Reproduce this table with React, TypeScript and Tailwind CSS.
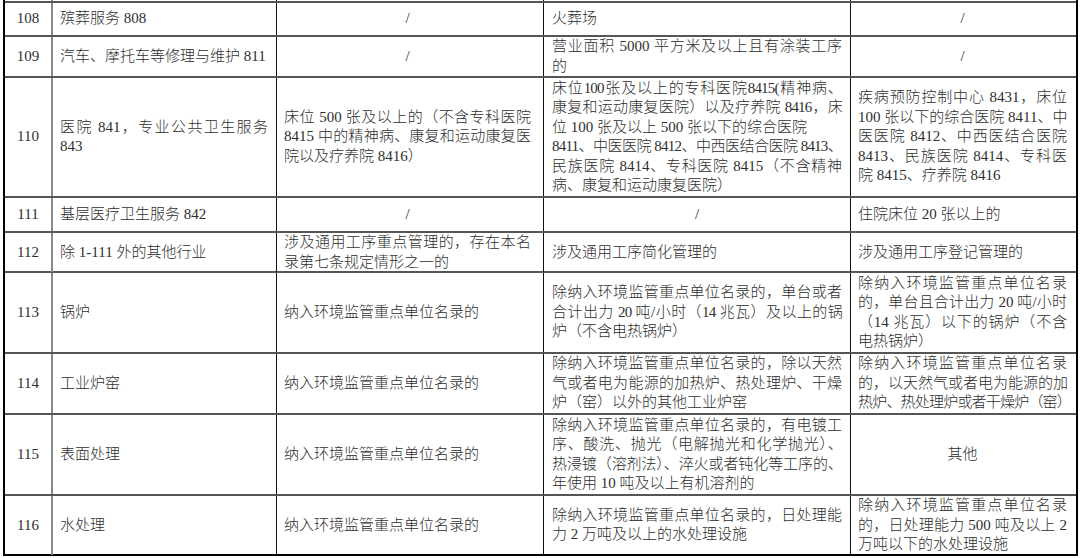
import React from 'react';

type Cell = { lines: string[]; center?: boolean };
type Row = { no: string; h: string; cells: Cell[]; last?: boolean };

const slash: Cell = { lines: ['/'], center: true };

const rows: Row[] = [
  {
    no: '108',
    h: 'h-[34px]',
    cells: [{ lines: ['殡葬服务 808'] }, slash, { lines: ['火葬场'] }, slash],
  },
  {
    no: '109',
    h: 'h-[41px]',
    cells: [
      { lines: ['汽车、摩托车等修理与维护 811'] },
      slash,
      { lines: ['营业面积 5000 平方米及以上且有涂装工序', '的'] },
      slash,
    ],
  },
  {
    no: '110',
    h: 'h-[120px]',
    cells: [
      { lines: ['医院 841，专业公共卫生服务', '843'] },
      { lines: ['床位 500 张及以上的（不含专科医院', '8415 中的精神病、康复和运动康复医', '院以及疗养院 8416）'] },
      {
        lines: [
          '床位100张及以上的专科医院8415(精神病、',
          '康复和运动康复医院）以及疗养院 8416，床',
          '位 100 张及以上 500 张以下的综合医院',
          '8411、中医医院 8412、中西医结合医院 8413、',
          '民族医院 8414、专科医院 8415（不含精神',
          '病、康复和运动康复医院）',
        ],
      },
      {
        lines: [
          '疾病预防控制中心 8431，床位',
          '100 张以下的综合医院 8411、中',
          '医医院 8412、中西医结合医院',
          '8413、民族医院 8414、专科医',
          '院 8415、疗养院 8416',
        ],
      },
    ],
  },
  {
    no: '111',
    h: 'h-[35px]',
    cells: [{ lines: ['基层医疗卫生服务 842'] }, slash, slash, { lines: ['住院床位 20 张以上的'] }],
  },
  {
    no: '112',
    h: 'h-[40px]',
    cells: [
      { lines: ['除 1-111 外的其他行业'] },
      { lines: ['涉及通用工序重点管理的，存在本名', '录第七条规定情形之一的'] },
      { lines: ['涉及通用工序简化管理的'] },
      { lines: ['涉及通用工序登记管理的'] },
    ],
  },
  {
    no: '113',
    h: 'h-[81px]',
    cells: [
      { lines: ['锅炉'] },
      { lines: ['纳入环境监管重点单位名录的'] },
      { lines: ['除纳入环境监管重点单位名录的，单台或者', '合计出力 20 吨/小时（14 兆瓦）及以上的锅', '炉（不含电热锅炉）'] },
      { lines: ['除纳入环境监管重点单位名录', '的，单台且合计出力 20 吨/小时', '（14 兆瓦）以下的锅炉（不含', '电热锅炉）'] },
    ],
  },
  {
    no: '114',
    h: 'h-[61px]',
    cells: [
      { lines: ['工业炉窑'] },
      { lines: ['纳入环境监管重点单位名录的'] },
      { lines: ['除纳入环境监管重点单位名录的，除以天然', '气或者电为能源的加热炉、热处理炉、干燥', '炉（窑）以外的其他工业炉窑'] },
      { lines: ['除纳入环境监管重点单位名录', '的，以天然气或者电为能源的加', '热炉、热处理炉或者干燥炉（窑）'] },
    ],
  },
  {
    no: '115',
    h: 'h-[81px]',
    cells: [
      { lines: ['表面处理'] },
      { lines: ['纳入环境监管重点单位名录的'] },
      {
        lines: [
          '除纳入环境监管重点单位名录的，有电镀工',
          '序、酸洗、抛光（电解抛光和化学抛光）、',
          '热浸镀（溶剂法）、淬火或者钝化等工序的、',
          '年使用 10 吨及以上有机溶剂的',
        ],
      },
      { lines: ['其他'], center: true },
    ],
  },
  {
    no: '116',
    h: 'h-[60px]',
    last: true,
    cells: [
      { lines: ['水处理'] },
      { lines: ['纳入环境监管重点单位名录的'] },
      { lines: ['除纳入环境监管重点单位名录的，日处理能', '力 2 万吨及以上的水处理设施'] },
      { lines: ['除纳入环境监管重点单位名录', '的，日处理能力 500 吨及以上 2', '万吨以下的水处理设施'] },
    ],
  },
];

// lines that are wider than the cell in our font: squeeze a little
const TIGHT = new Set([
  '热浸镀（溶剂法）、淬火或者钝化等工序的、',
  '热炉、热处理炉或者干燥炉（窑）',
  '序、酸洗、抛光（电解抛光和化学抛光）、',
  '8411、中医医院 8412、中西医结合医院 8413、',
  '床位100张及以上的专科医院8415(精神病、',
  '康复和运动康复医院）以及疗养院 8416，床',
  '合计出力 20 吨/小时（14 兆瓦）及以上的锅',
]);

// lines the source leaves ragged instead of stretching
const RAGGED = new Set(['位 100 张及以上 500 张以下的综合医院']);

const pad = ['pl-[7px] pr-2', 'pl-[7px] pr-[12px]', 'pl-2 pr-2', 'pl-[7px] pr-[9px]'];
const edge = [
  'border-r border-r-[#111]',
  'border-r border-r-[#111]',
  'border-r border-r-[#111]',
  '',
];

function Lines({ cell }: { cell: Cell }) {
  if (cell.center) {
    return <div className="w-full text-center">{cell.lines[0]}</div>;
  }
  return (
    <div className="w-full">
      {cell.lines.map((t, i) => {
        const flat = i === cell.lines.length - 1 || RAGGED.has(t);
        return (
          <div
            key={i}
            className={
              (flat ? 'whitespace-nowrap' : 'whitespace-nowrap text-justify [text-align-last:justify]') +
              (TIGHT.has(t) ? ' tracking-[-0.8px]' : '')
            }
          >
            {t}
          </div>
        );
      })}
    </div>
  );
}

export default function App() {
  return (
    <div className="h-[558px] w-[1080px] overflow-hidden bg-white font-['Liberation_Serif','Noto_Sans_CJK_SC',serif] text-[15px] font-light leading-[19.5px] text-[#2e2e2e]">
      <div className="ml-[3px] w-[1075px] border-x-2 border-black">
        {/* sliver of the row above */}
        <div className="grid h-[3px] grid-cols-[48px_224px_267px_307px_225px] border-b-2 border-b-[#555]">
          <div className="border-r-2 border-r-[#8a8a8a]" />
          <div className="border-r border-r-[#111]" />
          <div className="border-r border-r-[#111]" />
          <div className="border-r border-r-[#111]" />
          <div />
        </div>

        {rows.map((row) => (
          <div
            key={row.no}
            className={
              'grid grid-cols-[48px_224px_267px_307px_225px] border-b-2 ' +
              row.h +
              (row.last ? ' border-b-black' : ' border-b-[#555]')
            }
          >
            <div className="flex items-center justify-center border-r-2 border-r-[#8a8a8a]">{row.no}</div>
            {row.cells.map((cell, i) => (
              <div key={i} className={'flex items-center ' + pad[i] + ' ' + edge[i]}>
                <Lines cell={cell} />
              </div>
            ))}
          </div>
        ))}
      </div>
    </div>
  );
}
